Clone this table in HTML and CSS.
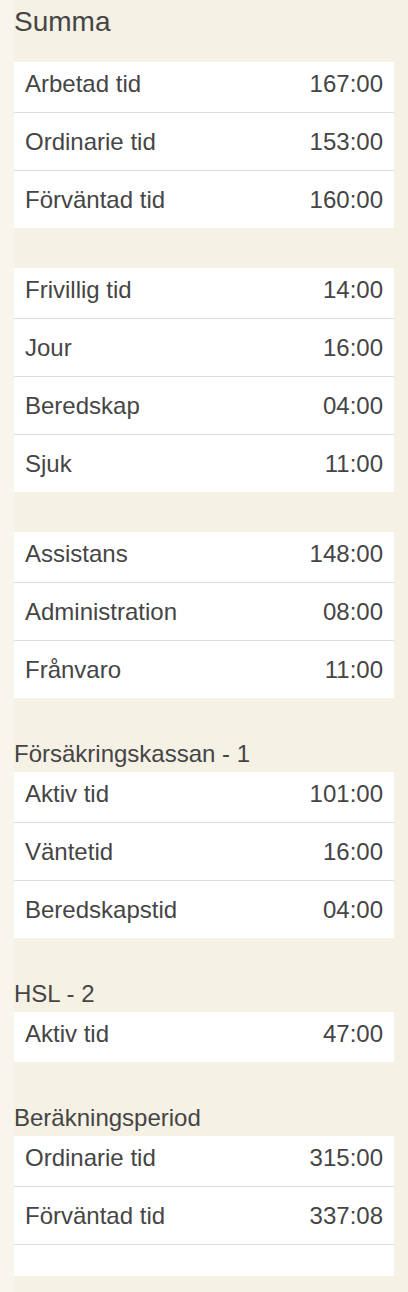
FILE: index.html
```html
<!DOCTYPE html>
<html lang="sv">
<head>
    <meta charset="UTF-8">
    <meta name="viewport" content="width=device-width, initial-scale=1.0">
    <title>Summa</title>
    <link rel="stylesheet" href="styles.css">
</head>
<body>

<div class="sida">
    <h1>Summa</h1>

    <ul class="kort">
        <li class="rad"><span>Arbetad tid</span><span>167:00</span></li>
        <li class="rad"><span>Ordinarie tid</span><span>153:00</span></li>
        <li class="rad"><span>Förväntad tid</span><span>160:00</span></li>
    </ul>

    <ul class="kort">
        <li class="rad"><span>Frivillig tid</span><span>14:00</span></li>
        <li class="rad"><span>Jour</span><span>16:00</span></li>
        <li class="rad"><span>Beredskap</span><span>04:00</span></li>
        <li class="rad"><span>Sjuk</span><span>11:00</span></li>
    </ul>

    <ul class="kort">
        <li class="rad"><span>Assistans</span><span>148:00</span></li>
        <li class="rad"><span>Administration</span><span>08:00</span></li>
        <li class="rad"><span>Frånvaro</span><span>11:00</span></li>
    </ul>

    <h2>Försäkringskassan - 1</h2>
    <ul class="kort">
        <li class="rad"><span>Aktiv tid</span><span>101:00</span></li>
        <li class="rad"><span>Väntetid</span><span>16:00</span></li>
        <li class="rad"><span>Beredskapstid</span><span>04:00</span></li>
    </ul>

    <h2>HSL - 2</h2>
    <ul class="kort">
        <li class="rad"><span>Aktiv tid</span><span>47:00</span></li>
    </ul>

    <h2>Beräkningsperiod</h2>
    <ul class="kort">
        <li class="rad"><span>Ordinarie tid</span><span>315:00</span></li>
        <li class="rad"><span>Förväntad tid</span><span>337:08</span></li>
        <li class="rad tom"></li>
    </ul>
</div>

</body>
</html>
```

FILE: styles.css
```css
body {
    margin: 0;
    font-family: "Liberation Sans", Arial, sans-serif;
    color: #454545;
    background-color: #f8f5ec;
}
.sida {
    margin-left: 14px;
    padding: 0 14px 0 0;
    min-height: 1292px;
    background-color: #f5f1e5;
}
h1 {
    margin: 0;
    padding-top: 6px;
    margin-bottom: 24px;
    font-size: 28px;
    line-height: 32px;
    font-weight: normal;
}
h2 {
    margin: 42px 0 4px 0;
    font-size: 24px;
    line-height: 28px;
    font-weight: normal;
}
.kort {
    list-style: none;
    margin: 0 0 40px 0;
    padding: 0;
    background: white;
}
.rad {
    box-sizing: border-box;
    display: flex;
    justify-content: space-between;
    align-items: center;
    height: 58px;
    padding: 0 11px 0 11px;
    font-size: 24px;
    border-bottom: 1px solid #dddddd;
}
.rad:first-child {
    height: 51px;
    padding-bottom: 7px;
}
.rad:last-child {
    height: 57px;
    border-bottom: none;
}
.rad:only-child {
    height: 50px;
}
.rad.tom {
    height: 31px;
}
```
